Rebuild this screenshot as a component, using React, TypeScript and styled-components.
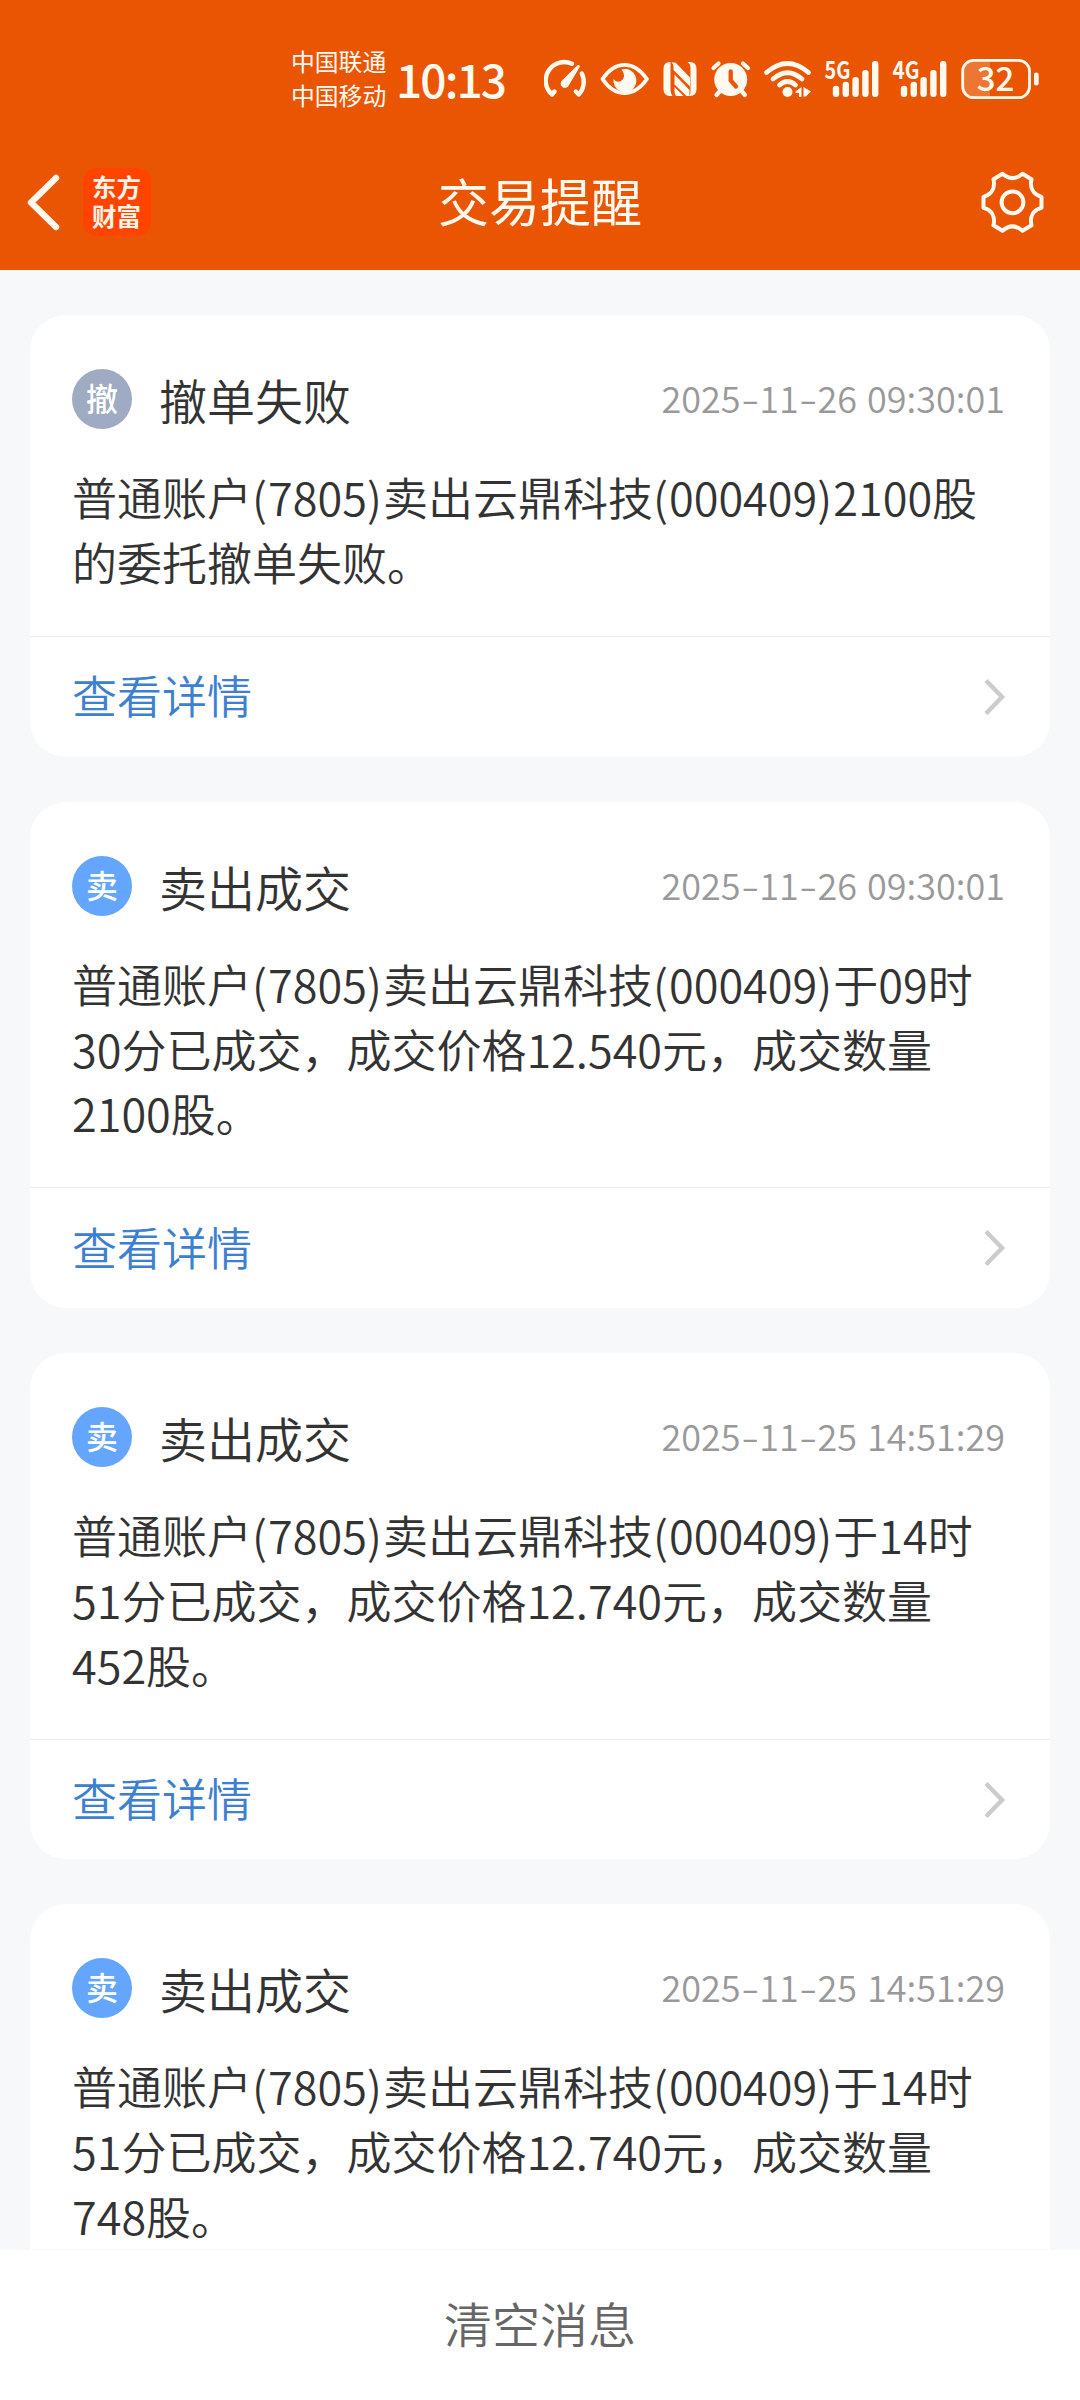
import React from "react";
import styled, { createGlobalStyle } from "styled-components";

const GlobalStyle = createGlobalStyle`
  * { box-sizing: border-box; }
  body { margin: 0; background: #f7f8fa; }
`;

const Screen = styled.div`
  width: 1080px;
  height: 2400px;
  display: flex;
  flex-direction: column;
  overflow: hidden;
  background: #f7f8fa;
  color: #333;
  font-family: "Noto Sans CJK SC", "Noto Sans", sans-serif;
  font-weight: 350;
`;

const Header = styled.header`
  flex: none;
  height: 270px;
  background: #ea5504;
  color: #fffaf0;
`;

const StatusBar = styled.div`
  height: 134px;
  padding: 24px 36px 0 291px;
  display: flex;
  align-items: center;
`;

const Carriers = styled.div`
  flex: none;
  width: 105px;
  margin-bottom: 2px;
  font-size: 23.8px;
  line-height: 34px;
  font-weight: 400;
`;

const Clock = styled.div`
  flex: none;
  width: 148px;
  margin-bottom: 3px;
  font-size: 46px;
  line-height: 50px;
  font-weight: 450;
  letter-spacing: -1.9px;
`;

const StatusIcons = styled.svg`
  flex: none;
  width: 500px;
  height: 70px;
`;

const NavBar = styled.div`
  height: 136px;
  padding: 0 35px 0 24px;
  display: grid;
  grid-template-columns: 271px 1fr 260px;
  align-items: center;
`;

const NavLeft = styled.div`
  display: flex;
  align-items: center;
  gap: 20px;
`;

const NavRight = styled.div`
  display: flex;
  justify-content: flex-end;
`;

const Logo = styled.div`
  width: 68px;
  height: 68px;
  padding: 4px 1px 0 0;
  border-radius: 14px;
  background: #ff4400;
  color: #fff3e6;
  font-size: 24.5px;
  font-weight: 700;
  line-height: 29px;
  text-align: center;
`;

const PageTitle = styled.h1`
  margin: 0;
  padding-bottom: 4px;
  font-size: 51px;
  line-height: 60px;
  font-weight: 400;
  text-align: center;
`;

const List = styled.main`
  flex: 1;
  min-height: 0;
  overflow: hidden;
  padding: 45.2px 30px 0;
  display: flex;
  flex-direction: column;
  gap: 44.8px;
`;

const Card = styled.article`
  flex: none;
  border-radius: 36px;
  background: #fff;
`;

const CardBody = styled.div`
  padding: 54px 42px 41px;
`;

const CardHead = styled.div`
  height: 60px;
  display: flex;
  align-items: center;
`;

const Badge = styled.span<{ $color: string }>`
  width: 60px;
  height: 60px;
  border-radius: 50%;
  background: ${(p) => p.$color};
  color: #fff;
  font-size: 32px;
  line-height: 57px;
  font-weight: 500;
  text-align: center;
`;

const CardTitle = styled.h2`
  margin: 0 0 0 27px;
  font-size: 48px;
  line-height: 60px;
  font-weight: inherit;
`;

const Time = styled.time`
  margin: 0 3px 4px auto;
  color: #999;
  font-size: 36px;
  line-height: 60px;
  word-spacing: 2px;
  white-space: nowrap;
`;

const Dash = styled.span`
  display: inline-block;
  margin: 0 3.2px;
  transform: scaleX(1.45);
`;

const Message = styled.p`
  margin: 36px 0 0;
  padding-right: 16px;
  font-size: 45px;
  line-height: 64.9px;
`;

const Paren = styled.span`
  letter-spacing: 1.15px;
`;

const DetailLink = styled.a`
  height: 120.8px;
  padding: 0 43px 0 42px;
  border-top: 1px solid #ebebeb;
  display: flex;
  align-items: center;
  justify-content: space-between;
  color: #3d80d2;
  font-size: 45px;
  line-height: 60px;
`;

const LinkLabel = styled.span`
  margin-bottom: 3px;
`;

const ClearButton = styled.button`
  flex: none;
  height: 151px;
  padding: 0 0 6px;
  border: 0;
  border-top: 1px solid #f7f8fa;
  background: #fff;
  color: #666;
  font: inherit;
  font-size: 48px;
`;

const BackIcon = () => (
  <svg width="39" height="60" viewBox="24 172 39 60" fill="none">
    <path d="M56 178 31 202.500 56 227" stroke="#fffaf0" strokeWidth="6.400" strokeLinecap="round" strokeLinejoin="round" />
  </svg>
);

const GearIcon = () => (
  <svg width="65" height="64" viewBox="980 169 65 64" fill="none" stroke="#fffaf0" strokeWidth="4" strokeLinejoin="round">
    <path d="M1002.500 172.800Q1012.500 181.500 1022.500 172.800L1031.500 178.300C1029.500 187 1033.500 193.500 1041.500 195.800V206.800C1033.500 209 1029.500 215.500 1031.500 224.300L1022.500 229.800Q1012.500 221 1002.500 229.800L993.500 224.300C995.500 215.500 991.500 209 983.500 206.800V195.800C991.500 193.500 995.500 187 993.500 178.300Z" />
    <circle cx="1012.500" cy="201.300" r="10.900" />
  </svg>
);

const ChevronIcon = () => (
  <svg width="24" height="40" viewBox="0 0 24 40" fill="none">
    <path d="M3 3.500 19 20 3 36.500" stroke="#ccc" strokeWidth="4.500" />
  </svg>
);

const signalTops = [85.7, 81.7, 77, 70, 61];

const SignalBars = ({ x }: { x: number }) => (
  <g>
    {signalTops.map((top, i) => (
      <rect key={top} x={x + i * 9.8} y={top} width="6.400" height={97 - top} rx="3" />
    ))}
  </g>
);

const StatusIconRow = () => (
  <StatusIcons viewBox="544 44 500 70" fill="#fffaf0">
    <g fill="none" stroke="#fffaf0" strokeWidth="4.400" strokeLinecap="round" strokeLinejoin="round">
      <path d="M572 63.800A18.500 18.500 0 0 0 552 94.500L554.500 91.500M552 94.500 548.800 90.500" />
      <path d="M581.800 73.500A18.500 18.500 0 0 1 578.800 94.500L575.800 91.500M578.800 94.500 582 90" />
    </g>
    <path d="M580 66.500 569 85A4.300 4.300 0 1 1 562.500 80L577.500 65.200Q579.800 64.200 580 66.500Z" />
    <path d="M602.500 79Q612 64.800 624.500 64.800T647 79Q637 93.200 624.500 93.200T602.500 79Z" fill="none" stroke="#fffaf0" strokeWidth="3.800" strokeLinejoin="round" />
    <path d="M621.500 69.500A11.500 11.500 0 1 1 613.500 79Q616 83 621 81Q627 77 621.500 69.500Z" />
    <path d="M670 62Q663.500 62 663.500 69V89Q663.500 96 670 96H672.500Q670.500 93.500 670.500 90V62Z" />
    <path d="M671.500 62.500H675.500L690 77.500V86.500L673.500 70V67Q673.500 64 671.500 62.500ZM674.500 74.500 689.500 90V96H686.500L674.500 84.500ZM674.500 87 683.500 96H676Q674.500 94 674.500 91Z" />
    <path d="M687.500 62H690Q696.500 62 696.500 69V89Q696.500 96 690 96H689.500Q690.500 94 690.500 91V68Q690.500 64 687.500 62Z" />
    <circle cx="730.700" cy="79.500" r="16.500" />
    <g fill="none" stroke="#fffaf0" strokeWidth="4.200" strokeLinecap="round">
      <path d="M713.500 68 718.500 63.500M743 63.500 748 68M720 91 716.500 95M741.500 91 745 95" />
      <path d="M730.700 71.500V80.500L736 86.500" stroke="#ea5504" strokeWidth="4.300" />
    </g>
    <g fill="none" stroke="#fffaf0" strokeWidth="4.800" strokeLinecap="round">
      <path d="M766.500 72.500Q787.500 54.500 808.500 72.500" />
      <path d="M773 79Q787.500 66.500 802 79" />
      <path d="M779.500 85Q787.500 78 795.500 85" />
    </g>
    <circle cx="787.500" cy="92" r="5" />
    <path d="M795.500 91.500 801.500 87V97H799V93H795.500ZM803.500 87 811 91.500 805.800 96.500H803.500Z" />
    <text x="824.500" y="79" fontSize="24" fontWeight="600" textLength="26" lengthAdjust="spacingAndGlyphs">5G</text>
    <SignalBars x={832.8} />
    <text x="892.500" y="79" fontSize="24" fontWeight="600" textLength="27" lengthAdjust="spacingAndGlyphs">4G</text>
    <SignalBars x={900.8} />
    <path d="M990 60H973Q962.700 60 962.700 71V87Q962.700 98 973 98H990Z" fillOpacity=".2" />
    <rect x="962.700" y="60.300" width="66.800" height="37.400" rx="11" fill="none" stroke="#fffaf0" strokeWidth="2.800" />
    <rect x="1034" y="72.500" width="4.700" height="13" rx="2.200" />
    <text x="995.500" y="91" fontSize="33" fontWeight="500" textAnchor="middle">32</text>
  </StatusIcons>
);

type Notice = { mark: string; color: string; title: string; date: string; clock: string; text: string };

const GRAY = "#9fabc2";
const BLUE = "#64a5fe";

const notices: Notice[] = [
  { mark: "撤", color: GRAY, title: "撤单失败", date: "2025-11-26", clock: "09:30:01", text: "普通账户(7805)卖出云鼎科技(000409)2100股的委托撤单失败。" },
  { mark: "卖", color: BLUE, title: "卖出成交", date: "2025-11-26", clock: "09:30:01", text: "普通账户(7805)卖出云鼎科技(000409)于09时30分已成交，成交价格12.540元，成交数量2100股。" },
  { mark: "卖", color: BLUE, title: "卖出成交", date: "2025-11-25", clock: "14:51:29", text: "普通账户(7805)卖出云鼎科技(000409)于14时51分已成交，成交价格12.740元，成交数量452股。" },
  { mark: "卖", color: BLUE, title: "卖出成交", date: "2025-11-25", clock: "14:51:29", text: "普通账户(7805)卖出云鼎科技(000409)于14时51分已成交，成交价格12.740元，成交数量748股。" },
];

const Timestamp = ({ date, clock }: { date: string; clock: string }) => {
  const [year, month, day] = date.split("-");
  return (
    <Time>
      {year}<Dash>-</Dash>{month}<Dash>-</Dash>{day} {clock}
    </Time>
  );
};

const NoticeCard = ({ notice }: { notice: Notice }) => (
  <Card>
    <CardBody>
      <CardHead>
        <Badge $color={notice.color}>{notice.mark}</Badge>
        <CardTitle>{notice.title}</CardTitle>
        <Timestamp date={notice.date} clock={notice.clock} />
      </CardHead>
      <Message>
        {notice.text.split(/([()])/).map((part, i) =>
          part === "(" || part === ")" ? <Paren key={i}>{part}</Paren> : part
        )}
      </Message>
    </CardBody>
    <DetailLink>
      <LinkLabel>查看详情</LinkLabel>
      <ChevronIcon />
    </DetailLink>
  </Card>
);

export default function App() {
  return (
    <Screen>
      <GlobalStyle />
      <Header>
        <StatusBar>
          <Carriers>
            <div>中国联通</div>
            <div>中国移动</div>
          </Carriers>
          <Clock>10:13</Clock>
          <StatusIconRow />
        </StatusBar>
        <NavBar>
          <NavLeft>
            <BackIcon />
            <Logo>
              <div>东方</div>
              <div>财富</div>
            </Logo>
          </NavLeft>
          <PageTitle>交易提醒</PageTitle>
          <NavRight>
            <GearIcon />
          </NavRight>
        </NavBar>
      </Header>
      <List>
        {notices.map((notice, i) => (
          <NoticeCard key={i} notice={notice} />
        ))}
      </List>
      <ClearButton>清空消息</ClearButton>
    </Screen>
  );
}
